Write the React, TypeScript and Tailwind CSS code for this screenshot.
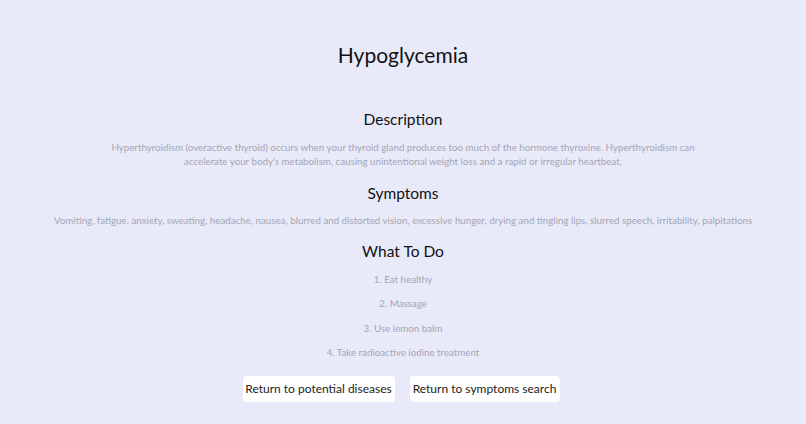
const steps = [
  "Eat healthy",
  "Massage",
  "Use lemon balm",
  "Take radioactive iodine treatment",
];

export default function App() {
  return (
    <div className="min-h-[424px] bg-[#e8eafa] font-['Lato',sans-serif] text-center">
      <div className="flex flex-col items-center pt-[40px]">
        <h1 className="text-[21px] leading-[30px] text-[#111]">Hypoglycemia</h1>

        <h2 className="mt-[38px] text-[15.5px] leading-[22px] text-[#111]">Description</h2>
        <p className="mt-[10px] max-w-[600px] text-[9.75px] leading-[14px] text-[#a5a5b3]">
          Hyperthyroidism (overactive thyroid) occurs when your thyroid gland produces too much of the hormone
          thyroxine. Hyperthyroidism can accelerate your body's metabolism, causing unintentional weight loss and
          a rapid or irregular heartbeat.
        </p>

        <h2 className="mt-[14px] text-[15.5px] leading-[22px] text-[#111]">Symptoms</h2>
        <p className="mt-[9px] text-[9.75px] leading-[14px] text-[#a5a5b3]">
          Vomiting, fatigue, anxiety, sweating, headache, nausea, blurred and distorted vision, excessive hunger,
          drying and tingling lips, slurred speech, irritability, palpitations
        </p>

        <h2 className="mt-[13px] text-[15.5px] leading-[22px] text-[#111]">What To Do</h2>
        <ol className="mt-[10px] flex flex-col gap-[10px] text-[9.75px] leading-[14.3px] text-[#a5a5b3]">
          {steps.map((s, i) => (
            <li key={s}>
              {i + 1}. {s}
            </li>
          ))}
        </ol>

        <div className="mt-[17px] mr-[4px] flex gap-[15px]">
          <button className="h-[26px] w-[152px] rounded-[4px] bg-white text-[12px] text-[#222]">
            Return to potential diseases
          </button>
          <button className="h-[26px] w-[150px] rounded-[4px] bg-white text-[12px] text-[#222]">
            Return to symptoms search
          </button>
        </div>
      </div>
    </div>
  );
}
